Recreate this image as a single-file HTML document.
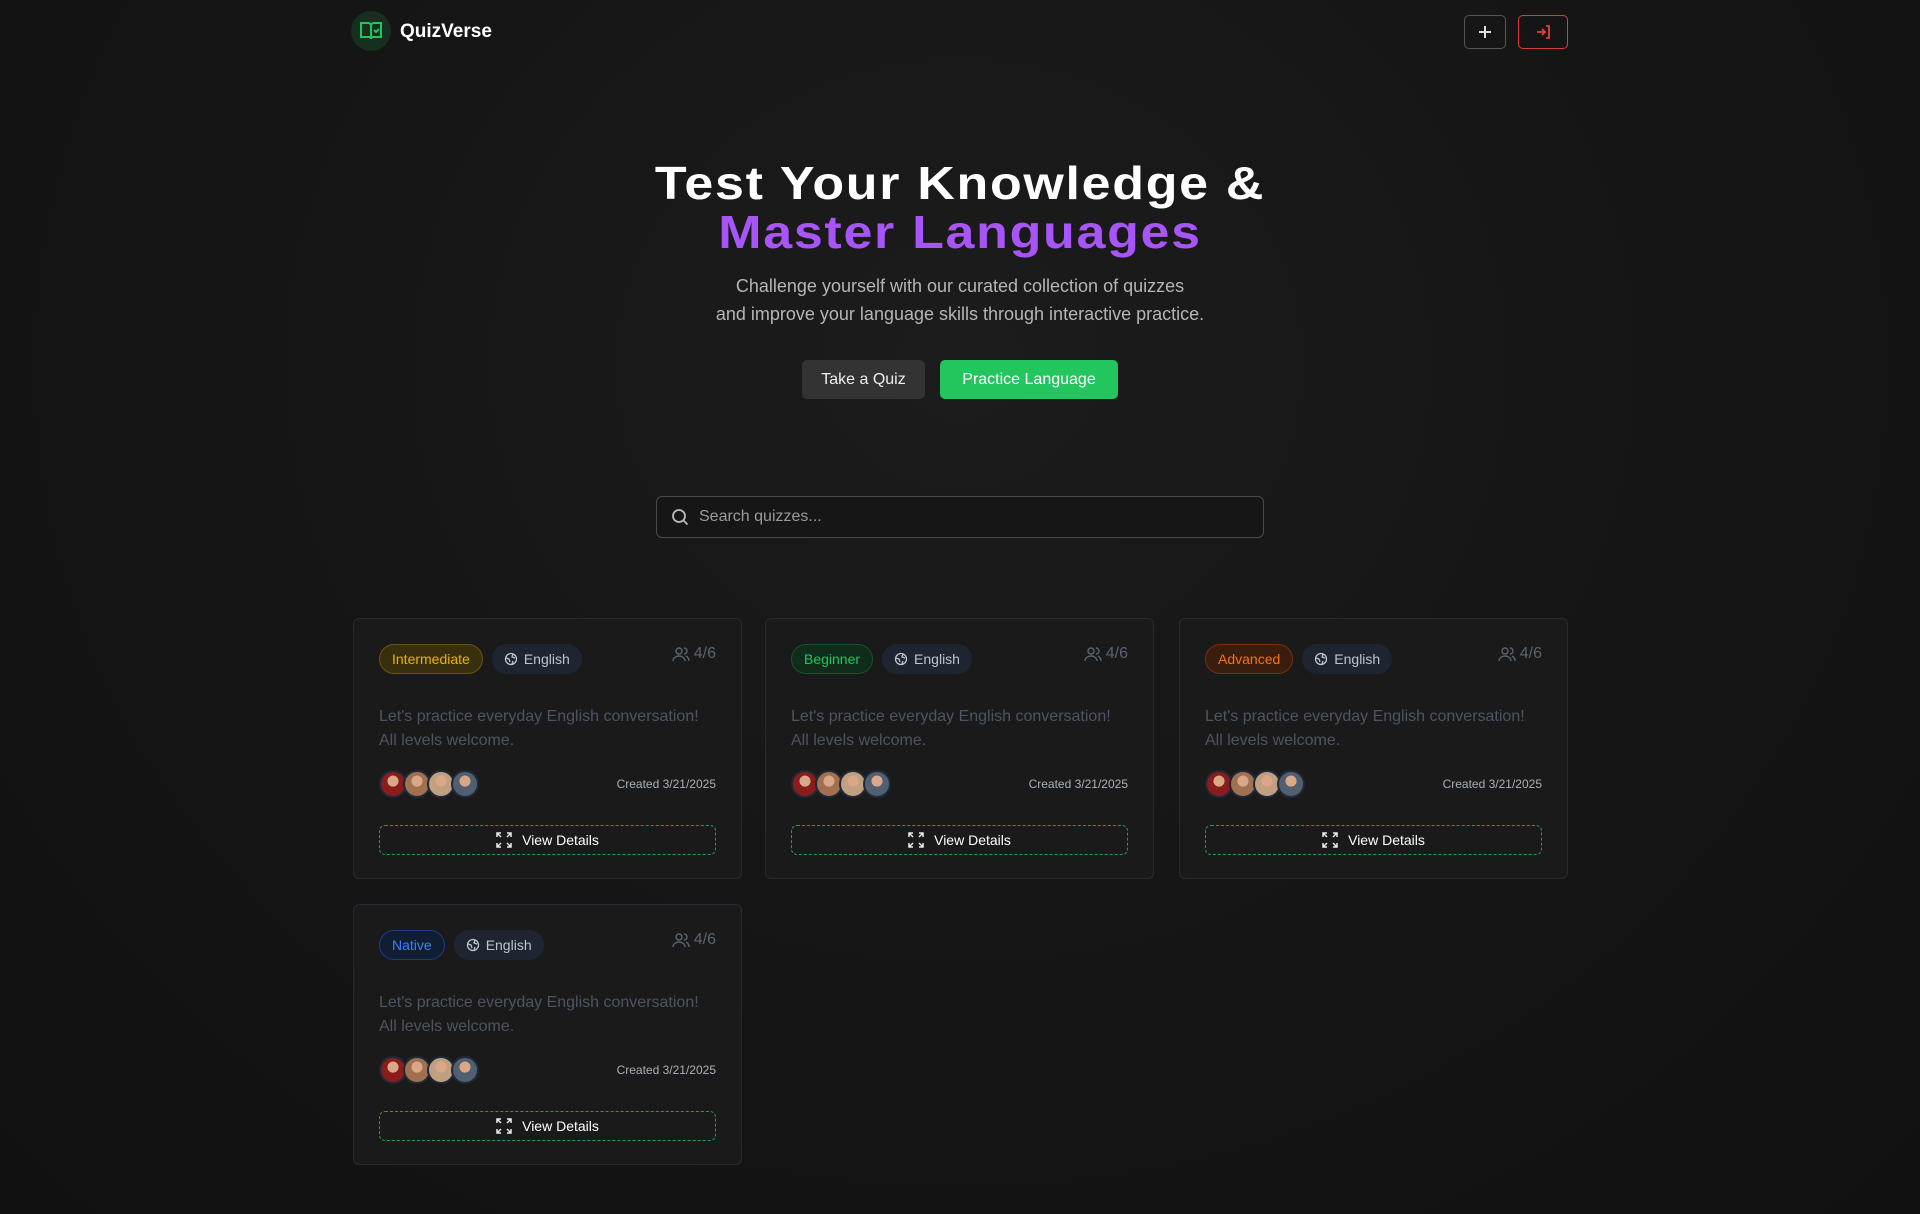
<!DOCTYPE html>
<html><head><meta charset="utf-8"><style>
*{box-sizing:border-box;margin:0;padding:0}
body{width:1920px;height:1214px;background:#131313;font-family:"Liberation Sans",sans-serif;color:#fff;position:relative;overflow:hidden}
.bg{position:absolute;inset:0;background:radial-gradient(ellipse at 50% 30%,#1c1c1c 0%,#141414 60%,#111 100%)}
.abs{position:absolute}
.logo{left:351px;top:11px;width:40px;height:40px;border-radius:50%;background:#15301f;display:flex;align-items:center;justify-content:center}
.brand{left:400px;top:21px;font-size:19px;font-weight:bold;color:#fff}
.ib{top:15px;height:34px;border-radius:5px;display:flex;align-items:center;justify-content:center}
h1{position:absolute;left:0;width:1920px;text-align:center;font-size:46px;font-weight:900;letter-spacing:1.5px;line-height:49px;top:159px;transform:scaleX(1.13);transform-origin:center}
.sub{left:0;width:1920px;text-align:center;top:272px;font-size:18px;line-height:28px;color:#b5b5b5}
.btn{top:360px;height:39px;border-radius:5px;font-size:16px;display:flex;align-items:center;justify-content:center}
.search{position:absolute;left:656px;top:496px;width:608px;height:42px;border:1px solid #4a4a4a;border-radius:6px;background:#161616;display:flex;align-items:center;padding-left:14px;color:#9a9a9a;font-size:16px}
.card{width:389px;height:261px;border:1px solid #262b33;border-radius:6px;background:#1a1a1a}
.row{position:absolute;left:25px;top:25px;display:flex;gap:9px}
.badge{height:30px;border-radius:15px;font-size:14px;display:flex;align-items:center;padding:0 12px}
.cnt{position:absolute;right:25px;top:26px;font-size:16px;color:#5b6472;display:flex;align-items:center;gap:4px}
.desc{position:absolute;left:25px;top:86px;width:335px;font-size:16px;line-height:24px;color:#4d5562}
.av{position:absolute;top:151px;width:28px;height:28px;border-radius:50%;border:2px solid #1f2937}
.created{position:absolute;right:25px;top:158px;font-size:12px;color:#aab0b8}
.vd{position:absolute;left:25px;right:25px;top:206px;height:30px;border:1px dashed #22a04a;border-radius:6px;display:flex;align-items:center;justify-content:center;gap:10px;font-size:14px}
</style></head><body>
<div class="bg"></div>
<div class="abs logo"><svg width="24" height="24" viewBox="0 0 24 24" fill="none" stroke="#22c55e" stroke-width="2"><path d="M2 4h7a3 3 0 0 1 3 3v13a2 2 0 0 0-2-2H2z"/><path d="M22 4h-7a3 3 0 0 0-3 3v13a2 2 0 0 1 2-2h8z"/><path d="M15 11l2 2 3-3"/></svg></div>
<div class="abs brand">QuizVerse</div>
<div class="abs ib" style="left:1464px;width:42px;border:1px solid #555"><svg width="14" height="14" viewBox="0 0 14 14" stroke="#ddd" stroke-width="2"><path d="M7 1v12M1 7h12"/></svg></div>
<div class="abs ib" style="left:1518px;width:50px;border:1px solid #dc3a3a"><svg width="16" height="16" viewBox="0 0 16 16" fill="none" stroke="#e04040" stroke-width="1.8"><path d="M2 8h8M7 5l3 3-3 3M11 2h3v12h-3"/></svg></div>
<h1>Test Your Knowledge &amp;<br><span style="color:#a855f7">Master Languages</span></h1>
<div class="abs sub">Challenge yourself with our curated collection of quizzes<br>and improve your language skills through interactive practice.</div>
<div class="abs btn" style="left:802px;width:123px;background:#333;color:#eee">Take a Quiz</div>
<div class="abs btn" style="left:940px;width:178px;background:#22c55e;color:#fff">Practice Language</div>
<div class="search"><svg width="18" height="18" viewBox="0 0 18 18" fill="none" stroke="#bbb" stroke-width="1.8"><circle cx="8" cy="8" r="6"/><path d="M12.5 12.5l4 4"/></svg><span style="margin-left:10px">Search quizzes...</span></div>

<div id="cards"></div>
<script>
var cs=[[353,618,'Intermediate','#eab308','#3a2f0c','#6b5410'],[765,618,'Beginner','#22c55e','#0f2d1a','#14532d'],[1179,618,'Advanced','#f97316','#3a1d0c','#7c2d12'],[353,904,'Native','#3b82f6','#111d33','#1e3a8a']];
var cols=['#8b1c1c','#a07050','#c0a080','#506070'];
var h='';
cs.forEach(function(c){
h+='<div class="abs card" style="left:'+c[0]+'px;top:'+c[1]+'px">';
h+='<div class="row"><div class="badge" style="color:'+c[3]+';background:'+c[4]+';border:1px solid '+c[5]+'">'+c[2]+'</div>';
h+='<div class="badge" style="background:#1f2530;color:#c0c4ca;gap:6px"><svg width="14" height="14" viewBox="0 0 14 14" fill="none" stroke="#c0c4ca" stroke-width="1.3"><circle cx="7" cy="7" r="5.5"/><path d="M2 6l3 1 1 3M9 2l-1 3 3 1M8 12l1-3"/></svg>English</div></div>';
h+='<div class="cnt"><svg width="18" height="16" viewBox="0 0 18 16" fill="none" stroke="#5b6472" stroke-width="1.4"><circle cx="7" cy="5" r="3"/><path d="M1 15c0-3 3-5 6-5s6 2 6 5M12 2a3 3 0 0 1 0 6M14 10c2 1 3 3 3 5"/></svg>4/6</div>';
h+='<div class="desc">Let\'s practice everyday English conversation! All levels welcome.</div>';
for(var i=0;i<4;i++)h+='<div class="av" style="left:'+(25+i*24)+'px;background:radial-gradient(circle at 50% 38%,#d8a888 0 28%,'+cols[i]+' 30%)"></div>';
h+='<div class="created">Created 3/21/2025</div>';
h+='<div class="vd"><svg width="16" height="16" viewBox="0 0 16 16" fill="none" stroke="#eee" stroke-width="1.5"><path d="M1 5V1h4M11 1h4v4M15 11v4h-4M5 15H1v-4M1 1l4 4M15 1l-4 4M15 15l-4-4M1 15l4-4"/></svg>View Details</div>';
h+='</div>';});
document.getElementById('cards').innerHTML=h;
</script>
</body></html>
